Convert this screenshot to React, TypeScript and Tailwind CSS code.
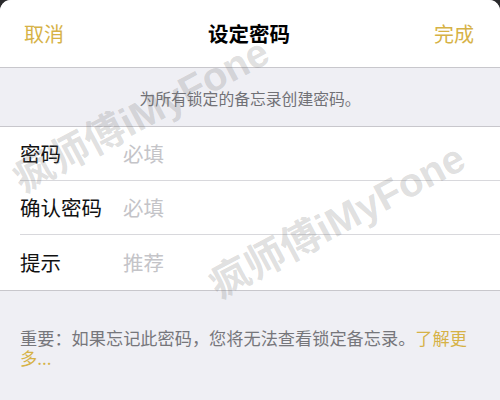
const rows = [
  { label: "密码", hint: "必填" },
  { label: "确认密码", hint: "必填" },
  { label: "提示", hint: "推荐" },
];

function Watermark({ className }: { className: string }) {
  return (
    <span
      className={
        "pointer-events-none absolute -translate-x-1/2 -translate-y-1/2 -rotate-[28deg] whitespace-nowrap text-[40px] font-bold leading-none text-[rgba(120,120,120,0.24)] " +
        className
      }
      style={{ fontFamily: '"Liberation Sans", "Noto Sans CJK SC", sans-serif' }}
    >
      疯师傅iMyFone
    </span>
  );
}

export default function App() {
  return (
    <div
      className="relative h-[400px] w-[500px] overflow-hidden bg-[#2a2a2c]"
      style={{ fontFamily: '"Noto Sans CJK SC", "Noto Sans", sans-serif' }}
    >
      <div className="flex h-full flex-col rounded-t-[11px] bg-[#efeff4]">
        {/* header */}
        <div className="flex h-[68px] items-center justify-between rounded-t-[11px] border-b border-[#c8c7cc] bg-white pl-[24px] pr-[26px]">
          <span className="text-[20px] text-[#d6b246]">取消</span>
          <span className="text-[20.5px] font-semibold text-black">设定密码</span>
          <span className="text-[20px] text-[#d6b246]">完成</span>
        </div>

        {/* description */}
        <div className="flex h-[58px] items-center justify-center pt-[4px] text-[15.8px] text-[#717176]">
          为所有锁定的备忘录创建密码。
        </div>

        {/* fields */}
        <div className="border-y border-[#c8c7cc] bg-white">
          {rows.map((r, i) => (
            <div key={r.label} className="pl-[20px]">
              <div
                className={
                  "flex items-center " +
                  (i < rows.length - 1 ? "h-[54px] border-b border-[#d8d8dc]" : "h-[55px]")
                }
              >
                <span className="w-[103px] text-[20.5px] text-[#111]">{r.label}</span>
                <span className="text-[20.5px] text-[#c4c4c8]">{r.hint}</span>
              </div>
            </div>
          ))}
        </div>

        {/* footer note */}
        <div className="pl-[20px] pr-[20px] pt-[37px] text-[17.2px] leading-[20px] text-[#76767b]">
          重要：如果忘记此密码，您将无法查看锁定备忘录。
          <span className="text-[#d6b246]">
            了解更
            <br />
            多...
          </span>
        </div>
      </div>

      <Watermark className="left-[141px] top-[115px]" />
      <Watermark className="left-[337px] top-[221px]" />
    </div>
  );
}
